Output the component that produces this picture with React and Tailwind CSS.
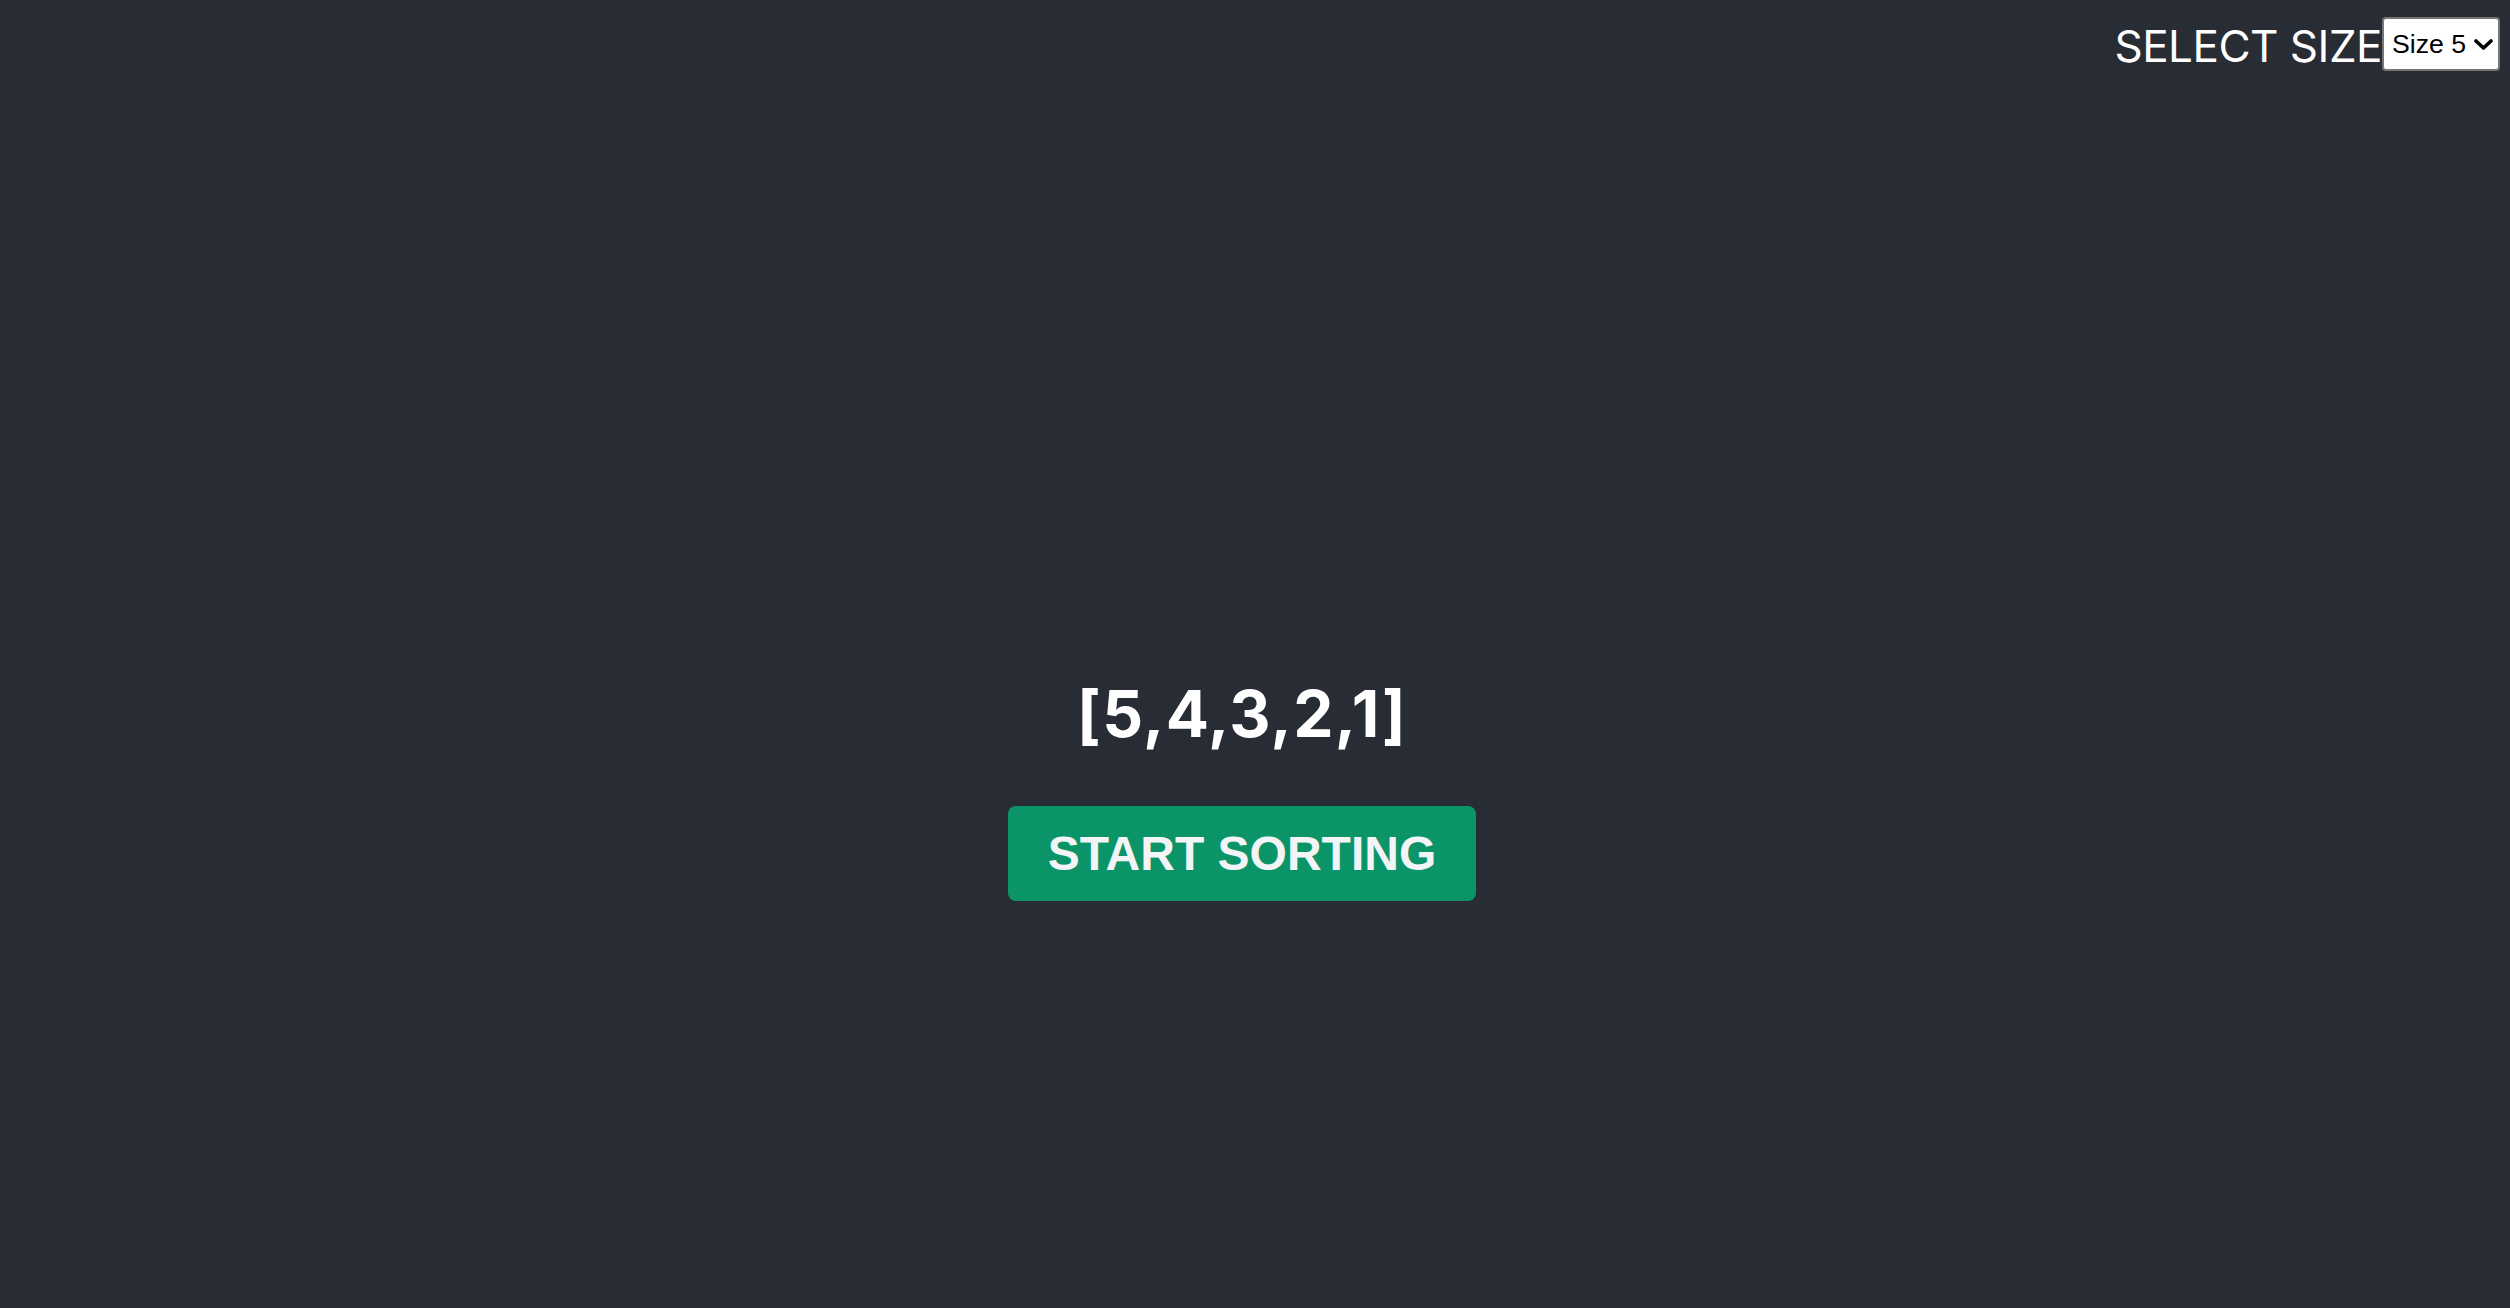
import React from "react";

export default function App() {
  return (
    <div className="min-h-screen w-full bg-[#282c34] flex flex-col">
      <header className="flex flex-row justify-end items-center pt-[17px] pr-[10px]">
        <span className="mt-[4px] text-white text-[44px] leading-none tracking-[-0.5px] font-['Inter','Liberation_Sans',sans-serif]">
          SELECT SIZE
        </span>
        <div className="relative flex">
          <select
            defaultValue="5"
            className="appearance-none w-[118px] h-[54px] bg-white text-black border-2 border-[#767676] rounded-[4px] pl-[8px] text-[26.67px] leading-normal font-['Liberation_Sans',Arial,sans-serif]"
          >
            <option value="5">Size 5</option>
            <option value="10">Size 10</option>
            <option value="20">Size 20</option>
          </select>
          <svg
            className="pointer-events-none absolute right-[7px] top-[22px]"
            width="19"
            height="11"
            viewBox="0 0 19 11"
            fill="none"
          >
            <path
              d="M2 2 L9.5 9 L17 2"
              stroke="#000"
              strokeWidth="3.6"
              strokeLinecap="round"
              strokeLinejoin="round"
            />
          </svg>
        </div>
      </header>
      <main className="flex flex-col items-center pt-[604px] pr-[26px]">
        <div className="text-white text-[64px] leading-[normal] font-bold tracking-[1.3px] font-['Inter','Liberation_Sans',sans-serif]">
          [5,4,3,2,1]
        </div>
        <button className="mt-[54px] bg-[#0b9468] text-[#f3f4f6] text-[48px] leading-[normal] font-bold px-[40px] py-[20px] rounded-[8px] font-['Liberation_Sans',Arial,sans-serif]">
          START SORTING
        </button>
      </main>
    </div>
  );
}
